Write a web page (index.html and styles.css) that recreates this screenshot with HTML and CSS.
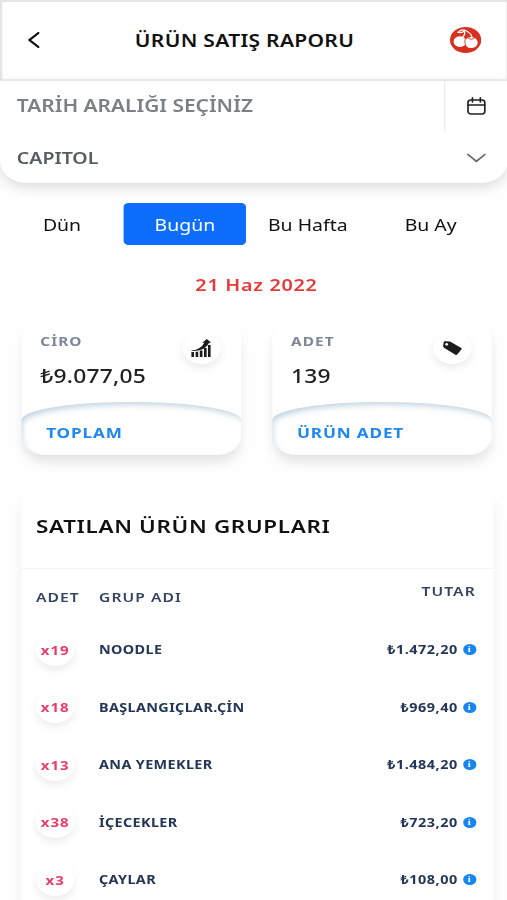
FILE: index.html
```html
<!DOCTYPE html>
<html lang="tr">
<head>
  <meta charset="UTF-8" />
  <meta name="viewport" content="width=device-width, initial-scale=1.0" />
  <title>Ürün Satış Raporu</title>
  <link rel="stylesheet" href="styles.css">
</head>
<body>
  <div class="screen">
    <header class="header">
      <svg class="back" viewBox="0 0 10 16"><path d="M9 1 L1.5 8 L9 15" /></svg>
      <h1>ÜRÜN SATIŞ RAPORU</h1>
      <svg class="logo" viewBox="0 0 26 26">
        <circle class="logo-bg" cx="13" cy="13" r="13" />
        <circle class="logo-fruit" cx="8.3" cy="14.6" r="5.3" />
        <circle class="logo-fruit" cx="17.6" cy="15.6" r="5.5" />
        <path class="logo-stem" d="M10.5 10 Q13.5 7 11.5 3.5 M18.5 11 Q18 6 12 3 M6.5 5.5 Q9 2 12.5 3.2 Q11 6 7 5.5" />
        <path class="logo-shade" d="M12.8 10.5 Q11.4 15 13.4 20 M15.5 11.6 Q17.5 13.2 20 11.5" />
      </svg>
    </header>

    <section class="filters">
      <div class="date-row">
        <span class="date-input">TARİH ARALIĞI SEÇİNİZ</span>
        <span class="date-button">
          <svg class="calendar" viewBox="0 0 16 18"><rect x="1" y="3" width="14" height="14" rx="2.4" /><path d="M1 8 H15 M4.7 0.7 V5 M11.3 0.7 V5" /></svg>
        </span>
      </div>
      <div class="select-row">
        <span>CAPITOL</span>
        <svg class="chevron" viewBox="0 0 16 10"><path d="M1 1.5 L8 8.3 L15 1.5" /></svg>
      </div>
    </section>

    <nav class="tabs">
      <a class="tab">Dün</a>
      <a class="tab active">Bugün</a>
      <a class="tab">Bu Hafta</a>
      <a class="tab">Bu Ay</a>
    </nav>

    <div class="day">21 Haz 2022</div>

    <section class="cards">
      <div class="card">
        <div class="card-body">
          <div>
            <div class="card-label">CİRO</div>
            <div class="card-value">₺9.077,05</div>
          </div>
          <span class="card-icon">
            <svg class="chart" viewBox="0 0 17 19"><path d="M0.5 13h2.2v5H0.5z M4 12.7h2.2v5.3H4z M7.5 11.5h2.2v6.5H7.5z M11 9h2.2v9H11z M14.3 6h2.2v12h-2.2z M0.5 11.6 Q8.5 10.5 11.3 3.8 L9.5 3.8 L13.4 0 L17 3.8 L15.3 3.8 Q12 12.5 0.5 12z" /></svg>
          </span>
        </div>
        <div class="card-footer">TOPLAM</div>
      </div>
      <div class="card">
        <div class="card-body">
          <div>
            <div class="card-label">ADET</div>
            <div class="card-value">139</div>
          </div>
          <span class="card-icon">
            <svg class="tag" viewBox="0 0 16 16"><path fill-rule="evenodd" d="M1.6 1.2 L6 1.4 L15.4 8 Q16 8.6 15.6 9.3 L12 14.4 Q11.4 15.2 10.5 14.7 L1 7.8 Q0.2 7 0.3 6 L0.7 2.2 Q0.9 1.3 1.6 1.2z M3.2 3a1.25 1.25 0 1 0 0.01 0z" /></svg>
          </span>
        </div>
        <div class="card-footer">ÜRÜN ADET</div>
      </div>
    </section>

    <section class="groups">
      <h2>SATILAN ÜRÜN GRUPLARI</h2>
      <div class="row head">
        <span class="head-qty">ADET</span>
        <span class="head-name">GRUP ADI</span>
        <span class="head-total">TUTAR</span>
      </div>
      <div class="row">
        <span class="qty">x19</span>
        <span class="name">NOODLE</span>
        <span class="total">₺1.472,20 <i class="info">i</i></span>
      </div>
      <div class="row">
        <span class="qty">x18</span>
        <span class="name">BAŞLANGIÇLAR.ÇİN</span>
        <span class="total">₺969,40 <i class="info">i</i></span>
      </div>
      <div class="row">
        <span class="qty">x13</span>
        <span class="name">ANA YEMEKLER</span>
        <span class="total">₺1.484,20 <i class="info">i</i></span>
      </div>
      <div class="row">
        <span class="qty">x38</span>
        <span class="name">İÇECEKLER</span>
        <span class="total">₺723,20 <i class="info">i</i></span>
      </div>
      <div class="row">
        <span class="qty">x3</span>
        <span class="name">ÇAYLAR</span>
        <span class="total">₺108,00 <i class="info">i</i></span>
      </div>
    </section>
  </div>
</body>
</html>
```
FILE: styles.css
```css
* {
  box-sizing: border-box;
}

body {
  margin: 0;
  height: 900px;
  overflow: hidden;
  background: #fefefe;
  font-family: "Noto Sans", "Open Sans", sans-serif;
  color: #111;
}

.screen {
  width: 422.5px;
  height: 900px;
  overflow: hidden;
  transform: scaleX(1.2);
  transform-origin: 0 0;
}

svg {
  display: block;
  fill: none;
  stroke-linecap: round;
  stroke-linejoin: round;
}

.header {
  height: 81px;
  display: flex;
  align-items: center;
  justify-content: space-between;
  padding: 0 21px 2px 21px;
  background: #fff;
  border: 2px solid #e5e5e5;
  border-right-width: 1px;
  border-bottom-color: #efefef;
}

.back {
  width: 10px;
  height: 16px;
  stroke: #111;
  stroke-width: 2;
}

.header h1 {
  margin: 0;
  font-size: 17.5px;
  font-weight: 600;
  letter-spacing: 0.25px;
}

.logo {
  width: 26px;
  height: 26px;
}

.logo-bg {
  fill: #d8301e;
}

.logo-fruit {
  fill: #fff;
}

.logo-stem {
  stroke: #fff;
  stroke-width: 1.1;
}

.logo-shade {
  stroke: #d8301e;
  stroke-width: 0.8;
}

.filters {
  height: 102px;
  background: #fff;
  border-radius: 0 0 22px 22px;
  box-shadow: 0 4px 12px rgba(0, 0, 0, 0.14);
}

.date-row {
  height: 51px;
  display: flex;
}

.date-input {
  flex: 1;
  padding: 0 14px;
  line-height: 48px;
  font-size: 17.4px;
  font-weight: 600;
  color: #7a8085;
}

.date-button {
  width: 52.5px;
  display: flex;
  justify-content: center;
  padding-top: 16px;
  border-left: 1px solid #ececec;
}

.calendar {
  width: 16px;
  height: 18px;
  stroke: #222;
  stroke-width: 1.4;
}

.select-row {
  height: 50px;
  display: flex;
  align-items: center;
  justify-content: space-between;
  padding: 1px 18px 0 14px;
  font-size: 16.3px;
  font-weight: 600;
  color: #555c62;
}

.chevron {
  width: 16px;
  height: 10px;
  stroke: #686d72;
  stroke-width: 1.7;
}

.tabs {
  display: grid;
  grid-template-columns: repeat(4, 102.4px);
  margin: 20px 0 0 0.5px;
}

.tab {
  height: 42px;
  line-height: 45px;
  text-align: center;
  font-size: 16.2px;
  border-radius: 4px;
}

.tab.active {
  background: #0d6efd;
  color: #fff;
}

.day {
  margin-top: 27px;
  padding-left: 5px;
  line-height: 26px;
  text-align: center;
  font-size: 16.5px;
  font-weight: 600;
  letter-spacing: 0.6px;
  color: #e63a3a;
}

.cards {
  display: grid;
  grid-template-columns: 183px 183px;
  gap: 26px;
  margin: 22px 0 0 17.5px;
}

.card {
  height: 135px;
  background: #fff;
  border-radius: 20px;
  box-shadow: 0 10px 12px -2px rgba(0, 0, 0, 0.08), 0 6px 10px rgba(0, 0, 0, 0.04);
}

.card-body {
  height: 82px;
  display: flex;
  justify-content: space-between;
  padding: 10px 17px 0 16px;
}

.card-label {
  line-height: 23px;
  font-size: 12.8px;
  font-weight: 700;
  letter-spacing: 0.9px;
  color: #7d8799;
}

.card-value {
  margin-top: 9px;
  line-height: 29px;
  font-size: 19px;
  font-weight: 500;
  letter-spacing: 0.2px;
  color: #222;
}

.card-icon {
  width: 32px;
  height: 32px;
  margin-top: 2px;
  display: flex;
  align-items: center;
  justify-content: center;
  background: #fff;
  border-radius: 50%;
  box-shadow: 0 4px 8px rgba(0, 0, 0, 0.08);
}

.card-icon svg {
  fill: #1c1c1c;
}

.chart {
  width: 17px;
  height: 19px;
}

.tag {
  width: 16px;
  height: 16px;
}

.card-footer {
  height: 53px;
  padding-left: 21px;
  line-height: 61px;
  border-radius: 50% 50% 20px 20px / 18px 18px 20px 20px;
  box-shadow: inset 2px 4px 6px -2px rgba(120, 160, 190, 0.5);
  font-size: 14.3px;
  font-weight: 700;
  letter-spacing: 0.7px;
  color: #1e88f0;
}

.groups {
  height: 600px;
  margin: 35px 0 0 17.5px;
  width: 393px;
  background: #fff;
  border-radius: 12px;
  box-shadow: 0 12px 14px rgba(0, 0, 0, 0.06);
}

.groups h2 {
  height: 79px;
  margin: 0;
  padding-left: 12.5px;
  line-height: 72px;
  font-size: 18.7px;
  font-weight: 600;
  letter-spacing: 0.55px;
  border-bottom: 1px solid #f4f4f4;
}

.row {
  height: 57.5px;
  display: grid;
  grid-template-columns: 52.5px 1fr auto;
  align-items: center;
  padding: 0 14px 0 12.5px;
  font-size: 12px;
  font-weight: 700;
  color: #233656;
}

.row.head {
  height: 52px;
  font-size: 13px;
  font-weight: 600;
  letter-spacing: 0.9px;
  color: #34435f;
}

.head-qty,
.head-name {
  padding-top: 4px;
}

.head-total {
  padding-bottom: 8px;
}

.qty {
  width: 32px;
  height: 32px;
  line-height: 33px;
  text-align: center;
  font-size: 12.5px;
  letter-spacing: 0.8px;
  color: #ea3c68;
  background: #fff;
  border-radius: 50%;
  box-shadow: 0 4px 8px rgba(0, 0, 0, 0.08);
}

.name {
  letter-spacing: 0.3px;
}

.total {
  display: flex;
  align-items: center;
  gap: 4px;
  letter-spacing: 0.45px;
}

.info {
  width: 11px;
  height: 11px;
  line-height: 11px;
  text-align: center;
  font-family: "Liberation Serif", serif;
  font-size: 9px;
  font-style: normal;
  letter-spacing: 0;
  color: #fff;
  background: #1686f5;
  border-radius: 50%;
}
```
